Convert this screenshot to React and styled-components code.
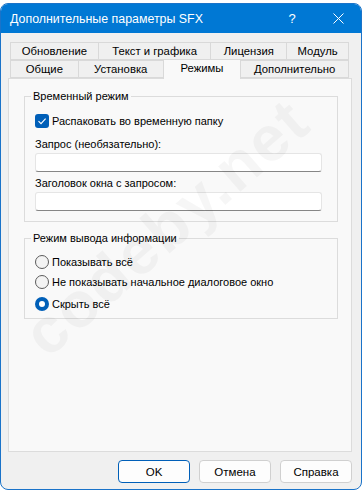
import React from "react";
import styled, { createGlobalStyle } from "styled-components";

const GlobalStyle = createGlobalStyle`
  html, body {
    margin: 0;
    padding: 0;
    background: #ffffff;
  }
  * {
    box-sizing: border-box;
  }
`;

const FONT = `"Liberation Sans", Arial, sans-serif`;

const Window = styled.div`
  width: 362px;
  height: 487px;
  margin-top: 3px;
  display: flex;
  flex-direction: column;
  background: #f0f0f0;
  border: 1px solid #1a73c9;
  border-radius: 8px;
  overflow: hidden;
  font-family: ${FONT};
  font-size: 11px;
  color: #000;
`;

const TitleBar = styled.div`
  height: 29px;
  flex: none;
  display: flex;
  align-items: center;
  background: #0078d4;
  color: #fff;
  padding-left: 9px;
`;

const Title = styled.div`
  flex: 1;
  font-size: 12.4px;
`;

const TitleButton = styled.div`
  width: 46px;
  height: 29px;
  display: flex;
  align-items: center;
  justify-content: center;
  color: #fff;
  font-size: 13px;
`;

const Body = styled.div`
  flex: 1;
  display: flex;
  flex-direction: column;
  padding: 9px 9px 0 7px;
`;

const Tabs = styled.div`
  display: flex;
  flex-direction: column;
  padding: 0 3px 0 2px;
`;

const TabRow = styled.div`
  display: flex;
  height: 18px;
  align-items: flex-end;
`;

const Tab = styled.div`
  width: ${(p) => p.$w}px;
  height: ${(p) => (p.$active ? 20 : 18)}px;
  margin-bottom: ${(p) => (p.$active ? -1 : 0)}px;
  position: relative;
  z-index: ${(p) => (p.$active ? 2 : 1)};
  display: flex;
  align-items: center;
  justify-content: center;
  padding-bottom: ${(p) => (p.$active ? 3 : 0)}px;
  background: ${(p) => (p.$active ? "#f9f9f9" : "#f0f0f0")};
  border: 1px solid #d9d9d9;
  border-bottom: ${(p) => (p.$active ? "none" : "1px solid #d9d9d9")};
  margin-left: -1px;
  font-size: 11.3px;
  &:first-child {
    margin-left: 0;
  }
  white-space: nowrap;
`;

const Panel = styled.div`
  position: relative;
  height: 374px;
  background: #f9f9f9;
  border: 1px solid #dcdcdc;
  padding: 9px 13px 0 15px;
  display: flex;
  flex-direction: column;
  gap: 8px;
  overflow: hidden;
`;

const Watermark = styled.div`
  position: absolute;
  left: 24px;
  top: 232px;
  font-family: "Liberation Sans", Arial, sans-serif;
  font-weight: 700;
  font-size: 64px;
  line-height: 1;
  color: rgba(0, 0, 0, 0.035);
  transform: rotate(-41deg);
  transform-origin: 0 50%;
  pointer-events: none;
  white-space: nowrap;
  letter-spacing: 2px;
`;

const Group = styled.fieldset`
  margin: 0;
  border: 1px solid #dcdcdc;
  padding: ${(p) => p.$pad};
  display: flex;
  flex-direction: column;
  min-width: 0;
  position: relative;
`;

const Legend = styled.legend`
  padding: 0 2px;
  margin-left: -4px;
  line-height: 16px;
`;

const CheckRow = styled.label`
  display: flex;
  align-items: center;
  gap: 3px;
  height: 20px;
  margin-top: ${(p) => p.$mt || 0}px;
`;

const CheckBox = styled.span`
  width: 14px;
  height: 14px;
  border-radius: 3px;
  background: #005fb8;
  display: flex;
  align-items: center;
  justify-content: center;
`;

const Radio = styled.span`
  width: 14px;
  height: 14px;
  border-radius: 50%;
  border: ${(p) => (p.$on ? "none" : "1px solid #5c5c5c")};
  background: ${(p) => (p.$on ? "#005fb8" : "#f3f3f3")};
  display: flex;
  align-items: center;
  justify-content: center;
  &::after {
    content: "";
    display: ${(p) => (p.$on ? "block" : "none")};
    width: 6px;
    height: 6px;
    border-radius: 50%;
    background: #fff;
  }
`;

const FieldLabel = styled.div`
  line-height: 16px;
  margin-top: ${(p) => p.$mt}px;
`;

const Input = styled.div`
  width: 287px;
  height: 19px;
  margin-top: 1px;
  background: #fff;
  border: 1px solid #e5e5e5;
  border-bottom: 1px solid #868686;
  border-radius: 3px;
`;

const Footer = styled.div`
  display: flex;
  justify-content: flex-end;
  gap: 9px;
  padding-top: 8px;
`;

const Button = styled.button`
  width: 72px;
  height: 23px;
  font-family: ${FONT};
  font-size: 11.5px;
  color: #000;
  background: #fdfdfd;
  border: 1px solid ${(p) => (p.$primary ? "#005fb8" : "#d0d0d0")};
  border-radius: 4px;
  padding: 0;
`;

const rows = [
  [
    ["Обновление", 89],
    ["Текст и графика", 114],
    ["Лицензия", 77],
    ["Модуль", 63],
  ],
  [
    ["Общие", 69],
    ["Установка", 86],
    ["Режимы", 79, true],
    ["Дополнительно", 109],
  ],
];

export default function App() {
  return (
    <>
      <GlobalStyle />
      <Window>
        <TitleBar>
          <Title>Дополнительные параметры SFX</Title>
          <TitleButton>?</TitleButton>
          <TitleButton>
            <svg width="11" height="11" viewBox="0 0 11 11">
              <path d="M0.5 0.5 L10.5 10.5 M10.5 0.5 L0.5 10.5" stroke="#fff" strokeWidth="1" />
            </svg>
          </TitleButton>
        </TitleBar>
        <Body>
          <Tabs>
            {rows.map((row, i) => (
              <TabRow key={i}>
                {row.map(([label, w, active]) => (
                  <Tab key={label} $w={w} $active={active}>
                    {label}
                  </Tab>
                ))}
              </TabRow>
            ))}
          </Tabs>
          <Panel>
            <Group $pad="0 10px 10px 10px">
              <Legend>Временный режим</Legend>
              <CheckRow $mt={7}>
                <CheckBox>
                  <svg width="10" height="10" viewBox="0 0 10 10">
                    <path d="M1.5 5.2 L4 7.6 L8.6 2.6" fill="none" stroke="#fff" strokeWidth="1.1" />
                  </svg>
                </CheckBox>
                Распаковать во временную папку
              </CheckRow>
              <FieldLabel $mt={5}>Запрос (необязательно):</FieldLabel>
              <Input />
              <FieldLabel $mt={3}>Заголовок окна с запросом:</FieldLabel>
              <Input />
            </Group>
            <Group $pad="0 10px 4px 10px">
              <Legend>Режим вывода информации</Legend>
              <CheckRow $mt={6}>
                <Radio />
                Показывать всё
              </CheckRow>
              <CheckRow>
                <Radio />
                Не показывать начальное диалоговое окно
              </CheckRow>
              <CheckRow $mt={2}>
                <Radio $on />
                Скрыть всё
              </CheckRow>
            </Group>
            <Watermark>codeby.net</Watermark>
          </Panel>
          <Footer>
            <Button $primary>OK</Button>
            <Button>Отмена</Button>
            <Button>Справка</Button>
          </Footer>
        </Body>
      </Window>
    </>
  );
}
